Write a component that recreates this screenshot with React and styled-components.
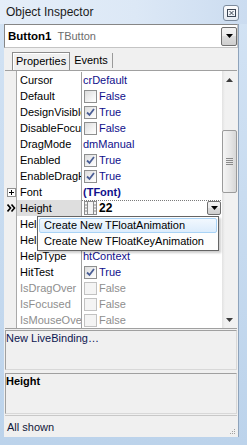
import React from 'react'
import styled, { createGlobalStyle, css } from 'styled-components'

const GlobalStyle = createGlobalStyle`
  html, body {
    margin: 0;
    padding: 0;
  }
  body {
    font-family: "Liberation Sans", Arial, sans-serif;
    font-size: 11px;
    color: #000;
  }
  * {
    box-sizing: border-box;
  }
`

const NAVY = '#10108c'

const Frame = styled.div`
  width: 247px;
  height: 445px;
  display: flex;
  flex-direction: column;
  background: linear-gradient(to bottom, #d3e3f4, #bcd3eb);
  overflow: hidden;
`

const TitleBar = styled.div`
  height: 24px;
  display: flex;
  align-items: flex-start;
  justify-content: space-between;
  padding: 0 8px 0 6px;
  background: linear-gradient(to right, #e5eef9 0%, #dce8f6 55%, #cbdcf0 100%);
`

const Title = styled.span`
  font-size: 12px;
  line-height: 25px;
  color: #1b1b1b;
`

const CloseButton = styled.div`
  margin-top: 5px;
  width: 16px;
  height: 16px;
  border: 1px solid #7c8b9d;
  border-radius: 3px;
  background: linear-gradient(#fdfdfe, #e4eaf1);
  display: flex;
  align-items: center;
  justify-content: center;
`

const Body = styled.div`
  flex: 1;
  display: flex;
  padding: 0 8px 8px 4px;
`

const Client = styled.div`
  flex: 1;
  display: flex;
  flex-direction: column;
  background: #f0f0f0;
  border-right: 1px solid #8ea3bb;
`

const Combo = styled.div`
  height: 24px;
  display: flex;
  align-items: center;
  background: #fff;
  border: 1px solid #868686;
  border-right-color: #c4c4c4;
  border-bottom-color: #c4c4c4;
`

const ComboText = styled.div`
  flex: 1;
  display: flex;
  align-items: baseline;
  gap: 6px;
  padding-left: 3px;
`

const ObjName = styled.span`
  font-weight: bold;
  font-size: 11.5px;
`

const ObjType = styled.span`
  color: #6d6d6d;
`

const DropButton = styled.div`
  width: ${(p) => p.$w || 16}px;
  height: ${(p) => p.$h || 19}px;
  margin-left: ${(p) => (p.$push ? 'auto' : '0')};
  margin-right: ${(p) => p.$mr || 0}px;
  border: 1px solid #707070;
  border-radius: 2px;
  background: linear-gradient(#f3f3f3, #ebebeb 50%, #dcdcdc 50%, #cfcfcf);
  display: flex;
  align-items: center;
  justify-content: center;
`

const TabStrip = styled.div`
  height: 22px;
  display: flex;
  align-items: flex-end;
  padding-left: 8px;
`

const Tab = styled.div`
  ${(p) =>
    p.$active
      ? css`
          height: 18px;
          line-height: 17px;
          padding: 0 3px;
          border: 1px solid #8c8c8c;
          border-bottom: 0;
          box-shadow: inset 1px 1px #fff;
        `
      : css`
          height: 15px;
          line-height: 14px;
          margin-bottom: 2px;
          padding: 0 4px;
          border-right: 1px solid #9a9a9a;
        `}
`

const Grid = styled.div`
  position: relative;
  height: 259px;
  margin: 0 1px;
  display: flex;
  background: #fff;
  border-top: 1px solid #a0a0a0;
  border-bottom: 1px solid #a0a0a0;
`

const Rows = styled.div`
  flex: 1;
  padding-top: 1px;
  background: linear-gradient(to right, #f0f0f0 11px, #a9a9a9 11px, #a9a9a9 12px, #fff 12px);
`

const Row = styled.div`
  display: flex;
  height: 16px;
`

const Gutter = styled.div`
  width: 12px;
  display: flex;
  align-items: center;
  justify-content: center;
`

const Name = styled.div`
  width: 65px;
  padding-left: 3px;
  line-height: 16px;
  white-space: nowrap;
  overflow: hidden;
  border-right: 1px solid #a0a0a0;
  color: ${(p) => (p.$muted ? '#8e8e8e' : '#000')};
  background: ${(p) => (p.$selected ? '#dedede' : 'transparent')};
`

const Value = styled.div`
  flex: 1;
  display: flex;
  align-items: center;
  padding-left: 1px;
  white-space: nowrap;
  overflow: hidden;
  color: ${(p) => (p.$muted ? '#8e8e8e' : NAVY)};
  font-weight: ${(p) => (p.$bold ? 'bold' : 'normal')};
  ${(p) =>
    p.$focus &&
    css`
      background: repeating-linear-gradient(to right, #7a7a7a 0 1px, transparent 1px 2px) top left / 100% 1px no-repeat;
    `}
`

const Check = styled.span`
  width: 13px;
  height: 13px;
  margin: 0 2px 0 1px;
  border: 1px solid ${(p) => (p.$disabled ? '#c2c2c2' : '#8e8f8f')};
  background: ${(p) =>
    p.$disabled ? '#f4f4f4' : 'linear-gradient(135deg, #dcdcdc, #f6f6f6 70%, #fff)'};
  display: flex;
  align-items: center;
  justify-content: center;
`

const Bold22 = styled.span`
  font-weight: bold;
  color: #000;
  font-size: 12px;
  margin-left: 2px;
`

const Expander = styled.span`
  width: 9px;
  height: 9px;
  border: 1px solid #919191;
  background: #fff;
  display: flex;
  align-items: center;
  justify-content: center;
`

const Scrollbar = styled.div`
  width: 15px;
  display: flex;
  flex-direction: column;
  background: linear-gradient(to right, #e2e2e2, #f1f1f1 3px, #f1f1f1);
`

const ArrowButton = styled.div`
  height: 17px;
  display: flex;
  align-items: center;
  justify-content: center;
`

const Track = styled.div`
  flex: 1;
`

const Thumb = styled.div`
  margin-top: 42px;
  height: 63px;
  border: 1px solid #9b9b9b;
  border-radius: 2px;
  background: linear-gradient(to right, #f5f5f5, #e8e8e8 50%, #d7d7d7);
  display: flex;
  align-items: center;
  justify-content: center;
`

const Popup = styled.div`
  position: absolute;
  left: 32px;
  top: 145px;
  width: 182px;
  padding: 1px;
  display: flex;
  flex-direction: column;
  gap: 1px;
  background: #fdfdfd;
  border: 1px solid #646464;
  box-shadow: 2px 2px 2px rgba(0, 0, 0, 0.2);
`

const MenuItem = styled.div`
  height: 15px;
  line-height: 13px;
  padding-left: 4px;
  border: 1px solid transparent;
  border-radius: 2px;
  color: #000;
  ${(p) =>
    p.$hot &&
    css`
      border-color: #a9d3f6;
      background: linear-gradient(#f2f8fe, #dcecfc);
    `}
`

const InfoPanel = styled.div`
  height: ${(p) => p.$h}px;
  margin: ${(p) => p.$mt}px 1px 0;
  border: 1px solid #a0a0a0;
  border-right-color: #d8d8d8;
  border-bottom-color: #d8d8d8;
  line-height: 13px;
  padding-top: 1px;
  color: ${(p) => (p.$bold ? '#000' : '#0c1650')};
  font-weight: ${(p) => (p.$bold ? 'bold' : 'normal')};
`

const StatusBar = styled.div`
  height: 22px;
  margin: 1px 1px 0;
  padding: 0 1px 0 2px;
  display: flex;
  align-items: center;
  justify-content: space-between;
  border-top: 1px solid #c8c8c8;
  color: #10183a;
`

const Grip = styled.svg`
  align-self: flex-end;
  margin-bottom: 1px;
`

const Tri = ({ down = true, color = '#000', w = 7 }) => (
  <svg width={w} height="4" viewBox="0 0 7 4">
    <path d={down ? 'M0 0H7L3.5 4Z' : 'M0 4H7L3.5 0Z'} fill={color} />
  </svg>
)

const CheckMark = ({ color = '#4a5e96' }) => (
  <svg width="9" height="9" viewBox="0 0 9 9">
    <path d="M1 4.5L3.5 7L8 1" fill="none" stroke={color} strokeWidth="1.8" />
  </svg>
)

const FilmIcon = () => (
  <svg width="13" height="14" viewBox="0 0 13 14">
    <rect x="0.5" y="0.5" width="12" height="13" fill="#f4f4f4" stroke="#8c8c8c" />
    <path d="M3.5 1V13M9.5 1V13" stroke="#8c8c8c" />
    <path d="M1 4H3M1 7H3M1 10H3M10 4H12M10 7H12M10 10H12" stroke="#8c8c8c" />
  </svg>
)

const SelectedMark = () => (
  <svg width="9" height="8" viewBox="0 0 9 8">
    <path d="M0.5 0.5L3.5 4L0.5 7.5M4.5 0.5L7.5 4L4.5 7.5" fill="none" stroke="#000" strokeWidth="1.6" />
  </svg>
)

const rows = [
  { name: 'Cursor', value: 'crDefault' },
  { name: 'Default', check: false, value: 'False' },
  { name: 'DesignVisible', check: true, value: 'True' },
  { name: 'DisableFocusEffect', check: false, value: 'False' },
  { name: 'DragMode', value: 'dmManual' },
  { name: 'Enabled', check: true, value: 'True' },
  { name: 'EnableDragHighlight', check: true, value: 'True' },
  { name: 'Font', value: '(TFont)', bold: true, expand: true },
  { name: 'Height', height: true },
  { name: 'HelpContext', value: '' },
  { name: 'HelpKeyword', value: '' },
  { name: 'HelpType', value: 'htContext' },
  { name: 'HitTest', check: true, value: 'True' },
  { name: 'IsDragOver', check: false, value: 'False', muted: true },
  { name: 'IsFocused', check: false, value: 'False', muted: true },
  { name: 'IsMouseOver', check: false, value: 'False', muted: true },
]

function PropRow({ row }) {
  return (
    <Row>
      <Gutter>
        {row.expand && (
          <Expander>
            <svg width="7" height="7" viewBox="0 0 7 7">
              <path d="M1 3.5H6M3.5 1V6" stroke="#000" />
            </svg>
          </Expander>
        )}
        {row.height && <SelectedMark />}
      </Gutter>
      <Name $muted={row.muted} $selected={row.height}>
        {row.name}
      </Name>
      {row.height ? (
        <Value $focus>
          <span style={{ marginLeft: 1, display: 'flex' }}>
            <FilmIcon />
          </span>
          <Bold22>22</Bold22>
          <DropButton $w={14} $h={14} $push $mr={1}>
            <Tri />
          </DropButton>
        </Value>
      ) : (
        <Value $muted={row.muted} $bold={row.bold}>
          {row.check !== undefined && (
            <Check $disabled={row.muted}>{row.check && <CheckMark />}</Check>
          )}
          {row.value}
        </Value>
      )}
    </Row>
  )
}

function App() {
  return (
    <>
      <GlobalStyle />
      <Frame>
        <TitleBar>
          <Title>Object Inspector</Title>
          <CloseButton>
            <svg width="9" height="8" viewBox="0 0 9 8">
              <rect x="0.5" y="0.5" width="8" height="7" fill="none" stroke="#3c4654" />
              <path d="M2.5 2L6.5 6M6.5 2L2.5 6" stroke="#3c4654" />
            </svg>
          </CloseButton>
        </TitleBar>
        <Body>
          <Client>
            <Combo>
              <ComboText>
                <ObjName>Button1</ObjName>
                <ObjType>TButton</ObjType>
              </ComboText>
              <DropButton>
                <Tri />
              </DropButton>
            </Combo>
            <TabStrip>
              <Tab $active>Properties</Tab>
              <Tab>Events</Tab>
            </TabStrip>
            <Grid>
              <Rows>
                {rows.map((r) => (
                  <PropRow key={r.name} row={r} />
                ))}
              </Rows>
              <Scrollbar>
                <ArrowButton>
                  <Tri down={false} color="#3d3d3d" />
                </ArrowButton>
                <Track>
                  <Thumb>
                    <svg width="7" height="7" viewBox="0 0 7 7">
                      <path d="M0 0.5H7M0 2.5H7M0 4.5H7M0 6.5H7" stroke="#8a8a8a" />
                    </svg>
                  </Thumb>
                </Track>
                <ArrowButton>
                  <Tri color="#3d3d3d" />
                </ArrowButton>
              </Scrollbar>
              <Popup>
                <MenuItem $hot>Create New TFloatAnimation</MenuItem>
                <MenuItem>Create New TFloatKeyAnimation</MenuItem>
              </Popup>
            </Grid>
            <InfoPanel $h={40} $mt={1}>
              New LiveBinding…
            </InfoPanel>
            <InfoPanel $h={41} $mt={3} $bold>
              Height
            </InfoPanel>
            <StatusBar>
              <span>All shown</span>
              <Grip width="8" height="8" viewBox="0 0 8 8">
                <path d="M6 1h1v1H6zM4 3h1v1H4zM6 3h1v1H6zM2 5h1v1H2zM4 5h1v1H4zM6 5h1v1H6z" fill="#a0a0a0" />
              </Grip>
            </StatusBar>
          </Client>
        </Body>
      </Frame>
    </>
  )
}

export default App
